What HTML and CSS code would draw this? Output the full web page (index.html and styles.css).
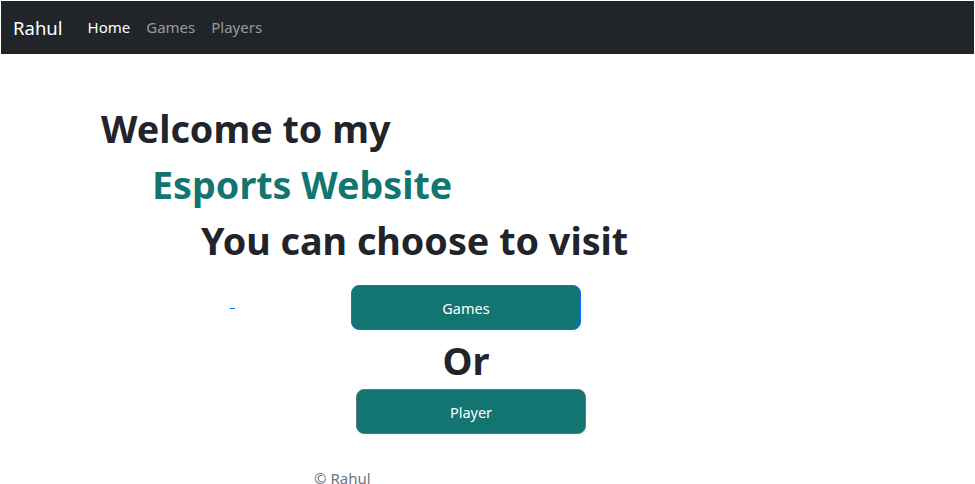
FILE: index.html
```html
<!DOCTYPE html>
<html lang="en">
<head>
<meta charset="utf-8">
<title>Rahul - Esports</title>
<link rel="stylesheet" href="styles.css">
</head>
<body>
<div class="page">
  <nav class="navbar">
    <a class="brand" href="#">Rahul</a>
    <div class="nav-links">
      <a class="nav-link active" href="#">Home</a>
      <a class="nav-link" href="#">Games</a>
      <a class="nav-link" href="#">Players</a>
    </div>
  </nav>
  <main class="main">
    <h1 class="title">Welcome to my</h1>
    <h1 class="title accent indent-1">Esports Website</h1>
    <h1 class="title indent-2">You can choose to visit</h1>
    <div class="choice-row">
      <a class="dash-link" href="#"> </a>
      <button class="choice-btn focused">Games</button>
    </div>
    <h1 class="or">Or</h1>
    <div class="choice-row second">
      <button class="choice-btn outlined">Player</button>
    </div>
    <footer class="footer">© Rahul</footer>
  </main>
</div>
</body>
</html>
```
FILE: styles.css
```css
html, body {
  margin: 0;
  padding: 0;
  background: #fff;
}
body {
  font-family: "Noto Sans", "Open Sans", sans-serif;
  color: #212529;
  overflow: hidden;
}
.page {
  padding: 1px;
}
.navbar {
  height: 53px;
  background: #212529;
  display: flex;
  align-items: center;
  padding: 0 12px 1px;
  box-sizing: border-box;
}
.brand {
  color: #fff;
  font-size: 18.5px;
  text-decoration: none;
  margin-right: 25px;
}
.nav-links {
  display: flex;
  gap: 16px;
}
.nav-link {
  color: rgba(255, 255, 255, 0.55);
  font-size: 15px;
  text-decoration: none;
}
.nav-link.active {
  color: #fff;
}
.main {
  padding: 51px 0 0 100px;
}
.title {
  margin: 0 0 8px;
  font-size: 37.7px;
  line-height: 48px;
  font-weight: 700;
}
.accent {
  color: #127572;
}
.indent-1 {
  margin-left: 51px;
}
.indent-2 {
  margin-left: 100px;
}
.choice-row {
  display: flex;
  align-items: center;
  margin-top: 20px;
}
.dash-link {
  display: inline-block;
  width: 5px;
  height: 1px;
  background: #0d6efd;
  margin-left: 129px;
  margin-top: 2px;
}
.choice-btn {
  width: 230px;
  height: 45px;
  background: #127572;
  color: #fff;
  border-radius: 8px;
  font-family: inherit;
  font-size: 14.5px;
  cursor: pointer;
}
.focused {
  border: 1px solid #0d6efd;
  margin-left: 116px;
}
.outlined {
  border: 1px solid #6c757d;
  margin-left: 255px;
}
.or {
  margin: 6px 0 5px 250px;
  width: 230px;
  text-align: center;
  font-size: 38px;
  line-height: 48px;
  font-weight: 700;
}
.choice-row.second {
  margin-top: 0;
}
.footer {
  margin: 34px 0 0 213px;
  color: #6c757d;
  font-size: 15px;
}
```
